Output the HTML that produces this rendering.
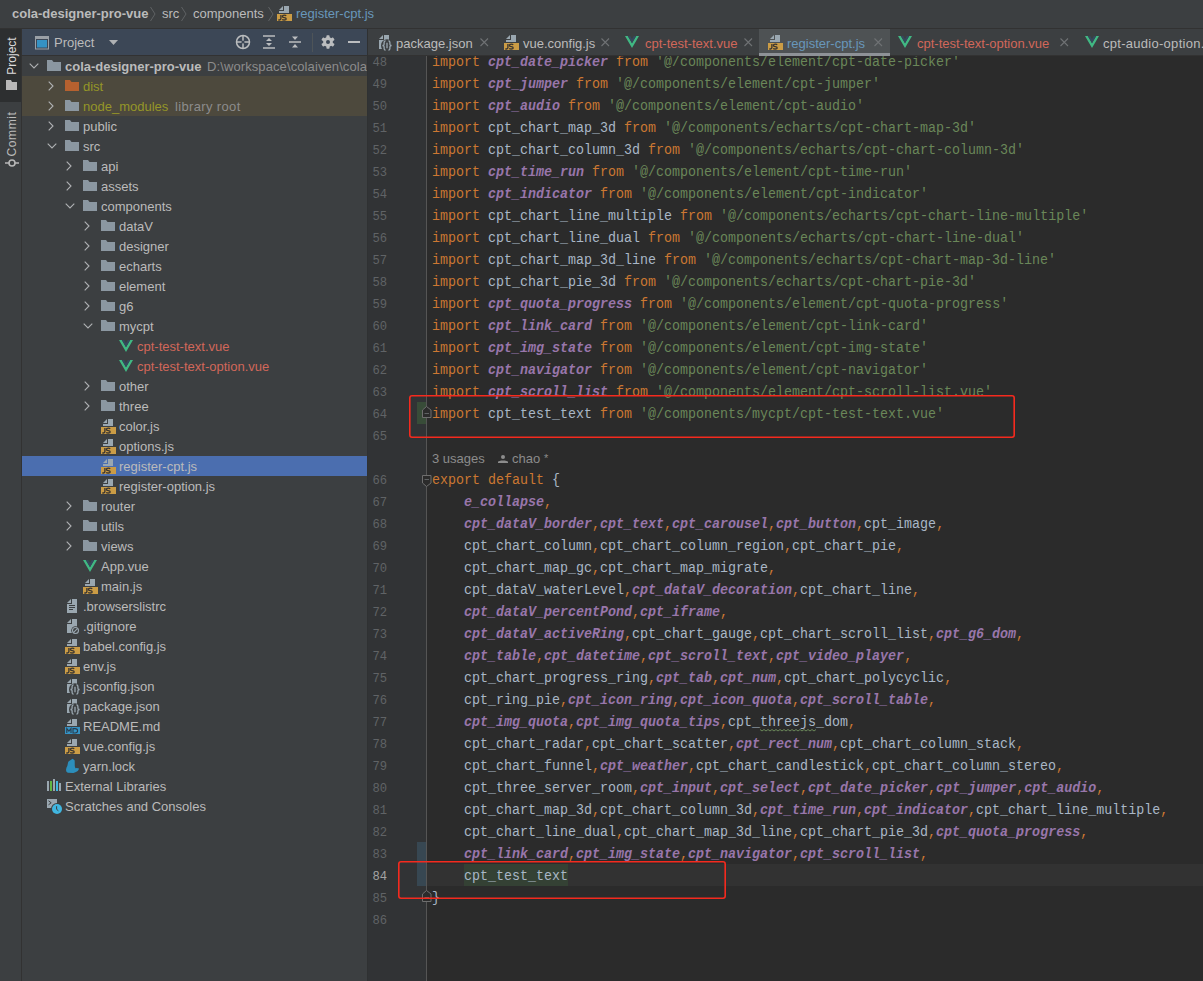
<!DOCTYPE html><html><head><meta charset="utf-8"><style>
*{margin:0;padding:0;box-sizing:border-box}
html,body{width:1203px;height:981px;overflow:hidden;background:#3C3F41}
body{position:relative;font-family:"Liberation Sans",sans-serif;font-size:13px;color:#BBBBBB}
.a{position:absolute}
.t{position:absolute;white-space:pre;line-height:16px}
.code{position:absolute;white-space:pre;font-family:"Liberation Mono",monospace;font-size:14.5px;line-height:22px;color:#A9B7C6;transform:scaleX(0.91954);transform-origin:0 0}
.k{color:#CC7832}
.s{color:#6A8759}
.i{color:#9876AA;font-style:italic;font-weight:bold}
.ln{position:absolute;font-family:"Liberation Mono",monospace;font-size:13.5px;color:#606366;text-align:right;width:30px;line-height:22px;transform:scaleX(0.9);transform-origin:100% 50%}
svg{position:absolute;overflow:visible}
</style></head><body><div class="a" style="left:0;top:0;width:1203px;height:28px;background:#3C3F41"></div><div class="a" style="left:0;top:28px;width:1203px;height:1px;background:#323232"></div><div class="t" style="left:12px;top:6px;font-weight:bold;color:#BBBBBB">cola-designer-pro-vue</div><svg style="left:150px;top:6px" width="6" height="16"><path d="M0.5 1 L5 8 L0.5 15" fill="none" stroke="#5F6264" stroke-width="1"/></svg><div class="t" style="left:162px;top:6px">src</div><svg style="left:181px;top:6px" width="6" height="16"><path d="M0.5 1 L5 8 L0.5 15" fill="none" stroke="#5F6264" stroke-width="1"/></svg><div class="t" style="left:193px;top:6px">components</div><svg style="left:268px;top:6px" width="6" height="16"><path d="M0.5 1 L5 8 L0.5 15" fill="none" stroke="#5F6264" stroke-width="1"/></svg><svg style="left:277px;top:6px" width="16" height="16" viewBox="0 0 16 16"><path d="M2 4 L6 0 V4 Z" fill="#9AA7B0"/><path d="M7 0 H12 V7 H2 V5 H7 Z" fill="#9AA7B0"/><rect x="0" y="8" width="15" height="7" fill="#CB9C45"/><path d="M3.9 9 V12.6 Q3.9 14 2.5 14 H1.3" fill="none" stroke="#3A3530" stroke-width="1.35"/><path d="M9.2 9.7 Q8.7 9.1 7.3 9.1 Q5.4 9.1 5.4 10.4 Q5.4 11.4 7.2 11.6 Q9.2 11.8 9.2 12.9 Q9.2 14 7.2 14 Q5.8 14 5.1 13.4" fill="none" stroke="#3A3530" stroke-width="1.35"/></svg><div class="t" style="left:296px;top:6px;color:#6897BB">register-cpt.js</div><div class="a" style="left:0;top:29px;width:21px;height:952px;background:#3C3F41"></div><div class="a" style="left:21px;top:29px;width:1px;height:952px;background:#323232"></div><div class="a" style="left:0;top:29px;width:21px;height:73px;background:#2D2F30"></div><div class="t" style="left:-9px;top:48px;width:42px;transform:rotate(-90deg);text-align:center;font-size:12px;color:#DDDDDD">Project</div><svg style="left:6px;top:80px" width="12" height="10"><path d="M0 0 H5 L6 2 H11 V10 H0 Z" fill="#B8B8B8"/></svg><div class="t" style="left:-14px;top:126px;width:52px;transform:rotate(-90deg);text-align:center;font-size:12px;letter-spacing:0.6px;color:#BBBBBB">Commit</div><svg style="left:5px;top:157px" width="14" height="12"><circle cx="7" cy="6" r="3" fill="none" stroke="#B8B8B8" stroke-width="1.6"/><path d="M0 6 H4 M10 6 H14" stroke="#B8B8B8" stroke-width="1.6"/></svg><div class="a" style="left:22px;top:29px;width:345px;height:26px;background:#3C4756"></div><div class="a" style="left:22px;top:55px;width:345px;height:1px;background:#323232"></div><div class="a" style="left:367px;top:29px;width:1px;height:952px;background:#2F3132"></div><svg style="left:35px;top:36px" width="14" height="14"><rect x="0.5" y="0.5" width="13" height="12.5" fill="none" stroke="#9AA0A6"/><rect x="1" y="1" width="12" height="2" fill="#9AA0A6"/><rect x="2" y="4" width="10" height="7.5" fill="#3592C4"/></svg><div class="t" style="left:54px;top:35px;color:#BBBBBB">Project</div><svg style="left:109px;top:40px" width="9" height="6"><path d="M0 0 H9 L4.5 5 Z" fill="#AFB1B3"/></svg><svg style="left:235px;top:34px" width="16" height="16"><circle cx="8" cy="8" r="6.5" fill="none" stroke="#BBBDBF" stroke-width="1.5"/><path d="M8 1 V15 M1 8 H15" stroke="#BBBDBF" stroke-width="1.5"/><circle cx="8" cy="8" r="1.6" fill="#3C4756"/></svg><svg style="left:262px;top:35px" width="14" height="14"><path d="M1 1 H13 M1 13 H13" stroke="#BBBDBF" stroke-width="1.5"/><path d="M7 3 L10 6 H4 Z M7 11 L10 8 H4 Z" fill="#BBBDBF"/></svg><svg style="left:288px;top:35px" width="14" height="14"><path d="M1 7 H13" stroke="#BBBDBF" stroke-width="1.5"/><path d="M4 1.5 H10 L7 5 Z M4 12.5 H10 L7 9 Z" fill="#BBBDBF"/></svg><div class="a" style="left:312px;top:33px;width:1px;height:19px;background:#4E5458"></div><svg style="left:321px;top:35px" width="14" height="14" viewBox="0 0 14 14"><g fill="#BBBDBF"><circle cx="7" cy="7" r="4.9"/><rect x="5.4" y="0.2" width="3.2" height="3" rx="0.8" transform="rotate(0 7 7)"/><rect x="5.4" y="0.2" width="3.2" height="3" rx="0.8" transform="rotate(60 7 7)"/><rect x="5.4" y="0.2" width="3.2" height="3" rx="0.8" transform="rotate(120 7 7)"/><rect x="5.4" y="0.2" width="3.2" height="3" rx="0.8" transform="rotate(180 7 7)"/><rect x="5.4" y="0.2" width="3.2" height="3" rx="0.8" transform="rotate(240 7 7)"/><rect x="5.4" y="0.2" width="3.2" height="3" rx="0.8" transform="rotate(300 7 7)"/></g><circle cx="7" cy="7" r="2" fill="#3C4756"/></svg><div class="a" style="left:348px;top:41px;width:12px;height:2px;background:#BBBDBF"></div><div class="a" style="left:22px;top:76px;width:345px;height:40px;background:#4D493D"></div><div class="a" style="left:22px;top:456px;width:345px;height:20px;background:#4B6EAF"></div><svg style="left:29px;top:63px" width="10" height="6" viewBox="0 0 10 6"><path d="M0.7 0.7 L5 5 L9.3 0.7" fill="none" stroke="#AFB1B3" stroke-width="1.1"/></svg><svg style="left:47px;top:60px" width="14" height="11" viewBox="0 0 14 11"><path d="M0 0 H5 L6.5 2 H14 V11 H0 Z" fill="#8B97A1"/></svg><div class="t" style="left:65px;top:59px;color:#BBBBBB;font-weight:bold;">cola-designer-pro-vue</div><div class="t" style="left:207px;top:59px;color:#8C8C8C;width:160px;overflow:hidden;letter-spacing:0.1px">D:\workspace\colaiven\cola-designer-pro-vue</div><svg style="left:48px;top:81px" width="6" height="10" viewBox="0 0 6 10"><path d="M0.7 0.7 L5 5 L0.7 9.3" fill="none" stroke="#AFB1B3" stroke-width="1.1"/></svg><svg style="left:65px;top:80px" width="14" height="11" viewBox="0 0 14 11"><path d="M0 0 H5 L6.5 2 H14 V11 H0 Z" fill="#B6612F"/></svg><div class="t" style="left:83px;top:79px;color:#959628;">dist</div><svg style="left:48px;top:101px" width="6" height="10" viewBox="0 0 6 10"><path d="M0.7 0.7 L5 5 L0.7 9.3" fill="none" stroke="#AFB1B3" stroke-width="1.1"/></svg><svg style="left:65px;top:100px" width="14" height="11" viewBox="0 0 14 11"><path d="M0 0 H5 L6.5 2 H14 V11 H0 Z" fill="#8B97A1"/></svg><div class="t" style="left:83px;top:99px;color:#959628;">node_modules</div><div class="t" style="left:175px;top:99px;color:#8C8C8C;letter-spacing:0.35px">library root</div><svg style="left:48px;top:121px" width="6" height="10" viewBox="0 0 6 10"><path d="M0.7 0.7 L5 5 L0.7 9.3" fill="none" stroke="#AFB1B3" stroke-width="1.1"/></svg><svg style="left:65px;top:120px" width="14" height="11" viewBox="0 0 14 11"><path d="M0 0 H5 L6.5 2 H14 V11 H0 Z" fill="#8B97A1"/></svg><div class="t" style="left:83px;top:119px;color:#BBBBBB;">public</div><svg style="left:47px;top:143px" width="10" height="6" viewBox="0 0 10 6"><path d="M0.7 0.7 L5 5 L9.3 0.7" fill="none" stroke="#AFB1B3" stroke-width="1.1"/></svg><svg style="left:65px;top:140px" width="14" height="11" viewBox="0 0 14 11"><path d="M0 0 H5 L6.5 2 H14 V11 H0 Z" fill="#8B97A1"/></svg><div class="t" style="left:83px;top:139px;color:#BBBBBB;">src</div><svg style="left:66px;top:161px" width="6" height="10" viewBox="0 0 6 10"><path d="M0.7 0.7 L5 5 L0.7 9.3" fill="none" stroke="#AFB1B3" stroke-width="1.1"/></svg><svg style="left:83px;top:160px" width="14" height="11" viewBox="0 0 14 11"><path d="M0 0 H5 L6.5 2 H14 V11 H0 Z" fill="#8B97A1"/></svg><div class="t" style="left:101px;top:159px;color:#BBBBBB;">api</div><svg style="left:66px;top:181px" width="6" height="10" viewBox="0 0 6 10"><path d="M0.7 0.7 L5 5 L0.7 9.3" fill="none" stroke="#AFB1B3" stroke-width="1.1"/></svg><svg style="left:83px;top:180px" width="14" height="11" viewBox="0 0 14 11"><path d="M0 0 H5 L6.5 2 H14 V11 H0 Z" fill="#8B97A1"/></svg><div class="t" style="left:101px;top:179px;color:#BBBBBB;">assets</div><svg style="left:65px;top:203px" width="10" height="6" viewBox="0 0 10 6"><path d="M0.7 0.7 L5 5 L9.3 0.7" fill="none" stroke="#AFB1B3" stroke-width="1.1"/></svg><svg style="left:83px;top:200px" width="14" height="11" viewBox="0 0 14 11"><path d="M0 0 H5 L6.5 2 H14 V11 H0 Z" fill="#8B97A1"/></svg><div class="t" style="left:101px;top:199px;color:#BBBBBB;">components</div><svg style="left:84px;top:221px" width="6" height="10" viewBox="0 0 6 10"><path d="M0.7 0.7 L5 5 L0.7 9.3" fill="none" stroke="#AFB1B3" stroke-width="1.1"/></svg><svg style="left:101px;top:220px" width="14" height="11" viewBox="0 0 14 11"><path d="M0 0 H5 L6.5 2 H14 V11 H0 Z" fill="#8B97A1"/></svg><div class="t" style="left:119px;top:219px;color:#BBBBBB;">dataV</div><svg style="left:84px;top:241px" width="6" height="10" viewBox="0 0 6 10"><path d="M0.7 0.7 L5 5 L0.7 9.3" fill="none" stroke="#AFB1B3" stroke-width="1.1"/></svg><svg style="left:101px;top:240px" width="14" height="11" viewBox="0 0 14 11"><path d="M0 0 H5 L6.5 2 H14 V11 H0 Z" fill="#8B97A1"/></svg><div class="t" style="left:119px;top:239px;color:#BBBBBB;">designer</div><svg style="left:84px;top:261px" width="6" height="10" viewBox="0 0 6 10"><path d="M0.7 0.7 L5 5 L0.7 9.3" fill="none" stroke="#AFB1B3" stroke-width="1.1"/></svg><svg style="left:101px;top:260px" width="14" height="11" viewBox="0 0 14 11"><path d="M0 0 H5 L6.5 2 H14 V11 H0 Z" fill="#8B97A1"/></svg><div class="t" style="left:119px;top:259px;color:#BBBBBB;">echarts</div><svg style="left:84px;top:281px" width="6" height="10" viewBox="0 0 6 10"><path d="M0.7 0.7 L5 5 L0.7 9.3" fill="none" stroke="#AFB1B3" stroke-width="1.1"/></svg><svg style="left:101px;top:280px" width="14" height="11" viewBox="0 0 14 11"><path d="M0 0 H5 L6.5 2 H14 V11 H0 Z" fill="#8B97A1"/></svg><div class="t" style="left:119px;top:279px;color:#BBBBBB;">element</div><svg style="left:84px;top:301px" width="6" height="10" viewBox="0 0 6 10"><path d="M0.7 0.7 L5 5 L0.7 9.3" fill="none" stroke="#AFB1B3" stroke-width="1.1"/></svg><svg style="left:101px;top:300px" width="14" height="11" viewBox="0 0 14 11"><path d="M0 0 H5 L6.5 2 H14 V11 H0 Z" fill="#8B97A1"/></svg><div class="t" style="left:119px;top:299px;color:#BBBBBB;">g6</div><svg style="left:83px;top:323px" width="10" height="6" viewBox="0 0 10 6"><path d="M0.7 0.7 L5 5 L9.3 0.7" fill="none" stroke="#AFB1B3" stroke-width="1.1"/></svg><svg style="left:101px;top:320px" width="14" height="11" viewBox="0 0 14 11"><path d="M0 0 H5 L6.5 2 H14 V11 H0 Z" fill="#8B97A1"/></svg><div class="t" style="left:119px;top:319px;color:#BBBBBB;">mycpt</div><svg style="left:119px;top:340px" width="14" height="12" viewBox="0 0 14 12"><path d="M0 0 H2.8 L7 7.2 L11.2 0 H14 L7 12 Z" fill="#41B883"/><path d="M2.8 0 H5.2 L7 3.2 L8.8 0 H11.2 L7 7.2 Z" fill="#35495E"/></svg><div class="t" style="left:137px;top:339px;color:#D1675A;">cpt-test-text.vue</div><svg style="left:119px;top:360px" width="14" height="12" viewBox="0 0 14 12"><path d="M0 0 H2.8 L7 7.2 L11.2 0 H14 L7 12 Z" fill="#41B883"/><path d="M2.8 0 H5.2 L7 3.2 L8.8 0 H11.2 L7 7.2 Z" fill="#35495E"/></svg><div class="t" style="left:137px;top:359px;color:#D1675A;">cpt-test-text-option.vue</div><svg style="left:84px;top:381px" width="6" height="10" viewBox="0 0 6 10"><path d="M0.7 0.7 L5 5 L0.7 9.3" fill="none" stroke="#AFB1B3" stroke-width="1.1"/></svg><svg style="left:101px;top:380px" width="14" height="11" viewBox="0 0 14 11"><path d="M0 0 H5 L6.5 2 H14 V11 H0 Z" fill="#8B97A1"/></svg><div class="t" style="left:119px;top:379px;color:#BBBBBB;">other</div><svg style="left:84px;top:401px" width="6" height="10" viewBox="0 0 6 10"><path d="M0.7 0.7 L5 5 L0.7 9.3" fill="none" stroke="#AFB1B3" stroke-width="1.1"/></svg><svg style="left:101px;top:400px" width="14" height="11" viewBox="0 0 14 11"><path d="M0 0 H5 L6.5 2 H14 V11 H0 Z" fill="#8B97A1"/></svg><div class="t" style="left:119px;top:399px;color:#BBBBBB;">three</div><svg style="left:101px;top:419px" width="16" height="16" viewBox="0 0 16 16"><path d="M2 4 L6 0 V4 Z" fill="#9AA7B0"/><path d="M7 0 H12 V7 H2 V5 H7 Z" fill="#9AA7B0"/><rect x="0" y="8" width="15" height="7" fill="#CB9C45"/><path d="M3.9 9 V12.6 Q3.9 14 2.5 14 H1.3" fill="none" stroke="#3A3530" stroke-width="1.35"/><path d="M9.2 9.7 Q8.7 9.1 7.3 9.1 Q5.4 9.1 5.4 10.4 Q5.4 11.4 7.2 11.6 Q9.2 11.8 9.2 12.9 Q9.2 14 7.2 14 Q5.8 14 5.1 13.4" fill="none" stroke="#3A3530" stroke-width="1.35"/></svg><div class="t" style="left:119px;top:419px;color:#BBBBBB;">color.js</div><svg style="left:101px;top:439px" width="16" height="16" viewBox="0 0 16 16"><path d="M2 4 L6 0 V4 Z" fill="#9AA7B0"/><path d="M7 0 H12 V7 H2 V5 H7 Z" fill="#9AA7B0"/><rect x="0" y="8" width="15" height="7" fill="#CB9C45"/><path d="M3.9 9 V12.6 Q3.9 14 2.5 14 H1.3" fill="none" stroke="#3A3530" stroke-width="1.35"/><path d="M9.2 9.7 Q8.7 9.1 7.3 9.1 Q5.4 9.1 5.4 10.4 Q5.4 11.4 7.2 11.6 Q9.2 11.8 9.2 12.9 Q9.2 14 7.2 14 Q5.8 14 5.1 13.4" fill="none" stroke="#3A3530" stroke-width="1.35"/></svg><div class="t" style="left:119px;top:439px;color:#BBBBBB;">options.js</div><svg style="left:101px;top:459px" width="16" height="16" viewBox="0 0 16 16"><path d="M2 4 L6 0 V4 Z" fill="#9AA7B0"/><path d="M7 0 H12 V7 H2 V5 H7 Z" fill="#9AA7B0"/><rect x="0" y="8" width="15" height="7" fill="#CB9C45"/><path d="M3.9 9 V12.6 Q3.9 14 2.5 14 H1.3" fill="none" stroke="#3A3530" stroke-width="1.35"/><path d="M9.2 9.7 Q8.7 9.1 7.3 9.1 Q5.4 9.1 5.4 10.4 Q5.4 11.4 7.2 11.6 Q9.2 11.8 9.2 12.9 Q9.2 14 7.2 14 Q5.8 14 5.1 13.4" fill="none" stroke="#3A3530" stroke-width="1.35"/></svg><div class="t" style="left:119px;top:459px;color:#BBBBBB;">register-cpt.js</div><svg style="left:101px;top:479px" width="16" height="16" viewBox="0 0 16 16"><path d="M2 4 L6 0 V4 Z" fill="#9AA7B0"/><path d="M7 0 H12 V7 H2 V5 H7 Z" fill="#9AA7B0"/><rect x="0" y="8" width="15" height="7" fill="#CB9C45"/><path d="M3.9 9 V12.6 Q3.9 14 2.5 14 H1.3" fill="none" stroke="#3A3530" stroke-width="1.35"/><path d="M9.2 9.7 Q8.7 9.1 7.3 9.1 Q5.4 9.1 5.4 10.4 Q5.4 11.4 7.2 11.6 Q9.2 11.8 9.2 12.9 Q9.2 14 7.2 14 Q5.8 14 5.1 13.4" fill="none" stroke="#3A3530" stroke-width="1.35"/></svg><div class="t" style="left:119px;top:479px;color:#BBBBBB;">register-option.js</div><svg style="left:66px;top:501px" width="6" height="10" viewBox="0 0 6 10"><path d="M0.7 0.7 L5 5 L0.7 9.3" fill="none" stroke="#AFB1B3" stroke-width="1.1"/></svg><svg style="left:83px;top:500px" width="14" height="11" viewBox="0 0 14 11"><path d="M0 0 H5 L6.5 2 H14 V11 H0 Z" fill="#8B97A1"/></svg><div class="t" style="left:101px;top:499px;color:#BBBBBB;">router</div><svg style="left:66px;top:521px" width="6" height="10" viewBox="0 0 6 10"><path d="M0.7 0.7 L5 5 L0.7 9.3" fill="none" stroke="#AFB1B3" stroke-width="1.1"/></svg><svg style="left:83px;top:520px" width="14" height="11" viewBox="0 0 14 11"><path d="M0 0 H5 L6.5 2 H14 V11 H0 Z" fill="#8B97A1"/></svg><div class="t" style="left:101px;top:519px;color:#BBBBBB;">utils</div><svg style="left:66px;top:541px" width="6" height="10" viewBox="0 0 6 10"><path d="M0.7 0.7 L5 5 L0.7 9.3" fill="none" stroke="#AFB1B3" stroke-width="1.1"/></svg><svg style="left:83px;top:540px" width="14" height="11" viewBox="0 0 14 11"><path d="M0 0 H5 L6.5 2 H14 V11 H0 Z" fill="#8B97A1"/></svg><div class="t" style="left:101px;top:539px;color:#BBBBBB;">views</div><svg style="left:83px;top:560px" width="14" height="12" viewBox="0 0 14 12"><path d="M0 0 H2.8 L7 7.2 L11.2 0 H14 L7 12 Z" fill="#41B883"/><path d="M2.8 0 H5.2 L7 3.2 L8.8 0 H11.2 L7 7.2 Z" fill="#35495E"/></svg><div class="t" style="left:101px;top:559px;color:#BBBBBB;">App.vue</div><svg style="left:83px;top:579px" width="16" height="16" viewBox="0 0 16 16"><path d="M2 4 L6 0 V4 Z" fill="#9AA7B0"/><path d="M7 0 H12 V7 H2 V5 H7 Z" fill="#9AA7B0"/><rect x="0" y="8" width="15" height="7" fill="#CB9C45"/><path d="M3.9 9 V12.6 Q3.9 14 2.5 14 H1.3" fill="none" stroke="#3A3530" stroke-width="1.35"/><path d="M9.2 9.7 Q8.7 9.1 7.3 9.1 Q5.4 9.1 5.4 10.4 Q5.4 11.4 7.2 11.6 Q9.2 11.8 9.2 12.9 Q9.2 14 7.2 14 Q5.8 14 5.1 13.4" fill="none" stroke="#3A3530" stroke-width="1.35"/></svg><div class="t" style="left:101px;top:579px;color:#BBBBBB;">main.js</div><svg style="left:65px;top:599px" width="14" height="15" viewBox="0 0 14 15"><path d="M2 4 L6 0 V4 Z" fill="#9AA7B0"/><path d="M7 0 H12 V14 H2 V5 H7 Z" fill="#9AA7B0"/><path d="M4 6.5 H10 M4 8.5 H10 M4 10.5 H8" stroke="#3C3F41" stroke-width="1"/></svg><div class="t" style="left:83px;top:599px;color:#BBBBBB;">.browserslistrc</div><svg style="left:65px;top:619px" width="16" height="16" viewBox="0 0 16 16"><path d="M2 4 L6 0 V4 Z" fill="#9AA7B0"/><path d="M7 0 H12 V14 H2 V5 H7 Z" fill="#9AA7B0"/><circle cx="10.5" cy="11.5" r="4.3" fill="#3C3F41"/><circle cx="10.5" cy="11.5" r="3" fill="none" stroke="#9AA7B0" stroke-width="1.1"/><path d="M8.4 13.6 L12.6 9.4" stroke="#9AA7B0" stroke-width="1.1"/></svg><div class="t" style="left:83px;top:619px;color:#BBBBBB;">.gitignore</div><svg style="left:65px;top:639px" width="16" height="16" viewBox="0 0 16 16"><path d="M2 4 L6 0 V4 Z" fill="#9AA7B0"/><path d="M7 0 H12 V7 H2 V5 H7 Z" fill="#9AA7B0"/><rect x="0" y="8" width="15" height="7" fill="#CB9C45"/><path d="M3.9 9 V12.6 Q3.9 14 2.5 14 H1.3" fill="none" stroke="#3A3530" stroke-width="1.35"/><path d="M9.2 9.7 Q8.7 9.1 7.3 9.1 Q5.4 9.1 5.4 10.4 Q5.4 11.4 7.2 11.6 Q9.2 11.8 9.2 12.9 Q9.2 14 7.2 14 Q5.8 14 5.1 13.4" fill="none" stroke="#3A3530" stroke-width="1.35"/></svg><div class="t" style="left:83px;top:639px;color:#BBBBBB;">babel.config.js</div><svg style="left:65px;top:659px" width="16" height="16" viewBox="0 0 16 16"><path d="M2 4 L6 0 V4 Z" fill="#9AA7B0"/><path d="M7 0 H12 V7 H2 V5 H7 Z" fill="#9AA7B0"/><rect x="0" y="8" width="15" height="7" fill="#CB9C45"/><path d="M3.9 9 V12.6 Q3.9 14 2.5 14 H1.3" fill="none" stroke="#3A3530" stroke-width="1.35"/><path d="M9.2 9.7 Q8.7 9.1 7.3 9.1 Q5.4 9.1 5.4 10.4 Q5.4 11.4 7.2 11.6 Q9.2 11.8 9.2 12.9 Q9.2 14 7.2 14 Q5.8 14 5.1 13.4" fill="none" stroke="#3A3530" stroke-width="1.35"/></svg><div class="t" style="left:83px;top:659px;color:#BBBBBB;">env.js</div><svg style="left:65px;top:679px" width="17" height="17" viewBox="0 0 17 17"><path d="M2 4 L6 0 V4 Z" fill="#9AA7B0"/><path d="M7 0 H12 V14 H2 V5 H7 Z" fill="#9AA7B0"/><ellipse cx="10" cy="10.5" rx="6" ry="6.2" fill="#3C3F41"/><path d="M8.6 5.8 Q7.1 5.8 7.1 7.4 V9.2 Q7.1 10.5 5.4 10.5 Q7.1 10.5 7.1 11.8 V13.6 Q7.1 15.2 8.6 15.2 M11.4 5.8 Q12.9 5.8 12.9 7.4 V9.2 Q12.9 10.5 14.6 10.5 Q12.9 10.5 12.9 11.8 V13.6 Q12.9 15.2 11.4 15.2 M10 7.8 V13.2" fill="none" stroke="#9AA7B0" stroke-width="1.3"/></svg><div class="t" style="left:83px;top:679px;color:#BBBBBB;">jsconfig.json</div><svg style="left:65px;top:699px" width="17" height="17" viewBox="0 0 17 17"><path d="M2 4 L6 0 V4 Z" fill="#9AA7B0"/><path d="M7 0 H12 V14 H2 V5 H7 Z" fill="#9AA7B0"/><ellipse cx="10" cy="10.5" rx="6" ry="6.2" fill="#3C3F41"/><path d="M8.6 5.8 Q7.1 5.8 7.1 7.4 V9.2 Q7.1 10.5 5.4 10.5 Q7.1 10.5 7.1 11.8 V13.6 Q7.1 15.2 8.6 15.2 M11.4 5.8 Q12.9 5.8 12.9 7.4 V9.2 Q12.9 10.5 14.6 10.5 Q12.9 10.5 12.9 11.8 V13.6 Q12.9 15.2 11.4 15.2 M10 7.8 V13.2" fill="none" stroke="#9AA7B0" stroke-width="1.3"/></svg><div class="t" style="left:83px;top:699px;color:#BBBBBB;">package.json</div><svg style="left:65px;top:719px" width="16" height="16" viewBox="0 0 16 16"><path d="M2 4 L6 0 V4 Z" fill="#9AA7B0"/><path d="M7 0 H12 V7 H2 V5 H7 Z" fill="#9AA7B0"/><rect x="0" y="8" width="15" height="7" fill="#3592C4"/><path d="M1.8 14 V9.6 L3.9 12.2 L6 9.6 V14" fill="none" stroke="#2A3C4C" stroke-width="1.1"/><path d="M8 9.6 H10 Q12.6 9.6 12.6 11.8 Q12.6 14 10 14 H8 Z" fill="none" stroke="#2A3C4C" stroke-width="1.1"/></svg><div class="t" style="left:83px;top:719px;color:#BBBBBB;">README.md</div><svg style="left:65px;top:739px" width="16" height="16" viewBox="0 0 16 16"><path d="M2 4 L6 0 V4 Z" fill="#9AA7B0"/><path d="M7 0 H12 V7 H2 V5 H7 Z" fill="#9AA7B0"/><rect x="0" y="8" width="15" height="7" fill="#CB9C45"/><path d="M3.9 9 V12.6 Q3.9 14 2.5 14 H1.3" fill="none" stroke="#3A3530" stroke-width="1.35"/><path d="M9.2 9.7 Q8.7 9.1 7.3 9.1 Q5.4 9.1 5.4 10.4 Q5.4 11.4 7.2 11.6 Q9.2 11.8 9.2 12.9 Q9.2 14 7.2 14 Q5.8 14 5.1 13.4" fill="none" stroke="#3A3530" stroke-width="1.35"/></svg><div class="t" style="left:83px;top:739px;color:#BBBBBB;">vue.config.js</div><svg style="left:65px;top:756px" width="16" height="18" viewBox="0 0 16 18"><path d="M7.5 2.8 Q8.8 3.2 9.7 4.6 L9.8 10.3 L10.4 12.2 Q12.5 11.6 14 12.6 Q13.6 14.2 12.7 14.9 Q10.5 16.6 8.3 16.9 L2.8 16.8 Q1 16 1 14 Q1.2 11.5 2.3 10 L3.2 6 Q4 4.8 5 4.6 Z" fill="#2C8EBB"/></svg><div class="t" style="left:83px;top:759px;color:#BBBBBB;">yarn.lock</div><svg style="left:47px;top:779px" width="15" height="13" viewBox="0 0 15 13"><rect x="0" y="2" width="2" height="10" fill="#9AA7B0"/><rect x="3" y="2" width="2" height="10" fill="#62B543"/><rect x="6" y="0" width="2" height="12" fill="#9AA7B0"/><rect x="9" y="2" width="2" height="10" fill="#40B6E0"/><rect x="12" y="4" width="2" height="8" fill="#9AA7B0"/></svg><div class="t" style="left:65px;top:779px;color:#BBBBBB;">External Libraries</div><svg style="left:47px;top:799px" width="17" height="17" viewBox="0 0 17 17"><rect x="0" y="0" width="10" height="9" fill="#9AA7B0"/><path d="M1.5 1.8 L4.2 3.8 L1.5 5.8" fill="none" stroke="#3C3F41" stroke-width="1"/><circle cx="10" cy="10" r="6" fill="#3C3F41"/><circle cx="10" cy="10" r="5" fill="#40B6E0"/><path d="M9.6 7.2 V10.3 L11.4 11.8" fill="none" stroke="#3C3F41" stroke-width="1"/></svg><div class="t" style="left:65px;top:799px;color:#BBBBBB;">Scratches and Consoles</div><div class="a" style="left:368px;top:29px;width:835px;height:26px;background:#3C3F41"></div><div class="a" style="left:368px;top:55px;width:835px;height:1px;background:#323232"></div><div class="a" style="left:759px;top:29px;width:131px;height:27px;background:#4E5254"></div><div class="a" style="left:759px;top:53px;width:131px;height:3px;background:#8E9297"></div><svg style="left:377px;top:35px" width="17" height="17" viewBox="0 0 17 17"><path d="M2 4 L6 0 V4 Z" fill="#9AA7B0"/><path d="M7 0 H12 V14 H2 V5 H7 Z" fill="#9AA7B0"/><ellipse cx="10" cy="10.5" rx="6" ry="6.2" fill="#3C3F41"/><path d="M8.6 5.8 Q7.1 5.8 7.1 7.4 V9.2 Q7.1 10.5 5.4 10.5 Q7.1 10.5 7.1 11.8 V13.6 Q7.1 15.2 8.6 15.2 M11.4 5.8 Q12.9 5.8 12.9 7.4 V9.2 Q12.9 10.5 14.6 10.5 Q12.9 10.5 12.9 11.8 V13.6 Q12.9 15.2 11.4 15.2 M10 7.8 V13.2" fill="none" stroke="#9AA7B0" stroke-width="1.3"/></svg><div class="t" style="left:396px;top:36px;color:#BBBBBB">package.json</div><svg style="left:480px;top:38px" width="9" height="9"><path d="M0.5 0.5 L8 8 M8 0.5 L0.5 8" stroke="#6F7274" stroke-width="1.1"/></svg><svg style="left:504px;top:35px" width="16" height="16" viewBox="0 0 16 16"><path d="M2 4 L6 0 V4 Z" fill="#9AA7B0"/><path d="M7 0 H12 V7 H2 V5 H7 Z" fill="#9AA7B0"/><rect x="0" y="8" width="15" height="7" fill="#CB9C45"/><path d="M3.9 9 V12.6 Q3.9 14 2.5 14 H1.3" fill="none" stroke="#3A3530" stroke-width="1.35"/><path d="M9.2 9.7 Q8.7 9.1 7.3 9.1 Q5.4 9.1 5.4 10.4 Q5.4 11.4 7.2 11.6 Q9.2 11.8 9.2 12.9 Q9.2 14 7.2 14 Q5.8 14 5.1 13.4" fill="none" stroke="#3A3530" stroke-width="1.35"/></svg><div class="t" style="left:523px;top:36px;color:#BBBBBB">vue.config.js</div><svg style="left:601px;top:38px" width="9" height="9"><path d="M0.5 0.5 L8 8 M8 0.5 L0.5 8" stroke="#6F7274" stroke-width="1.1"/></svg><svg style="left:625px;top:36px" width="14" height="12" viewBox="0 0 14 12"><path d="M0 0 H2.8 L7 7.2 L11.2 0 H14 L7 12 Z" fill="#41B883"/><path d="M2.8 0 H5.2 L7 3.2 L8.8 0 H11.2 L7 7.2 Z" fill="#35495E"/></svg><div class="t" style="left:645px;top:36px;color:#D1675A">cpt-test-text.vue</div><svg style="left:744px;top:38px" width="9" height="9"><path d="M0.5 0.5 L8 8 M8 0.5 L0.5 8" stroke="#6F7274" stroke-width="1.1"/></svg><svg style="left:768px;top:35px" width="16" height="16" viewBox="0 0 16 16"><path d="M2 4 L6 0 V4 Z" fill="#9AA7B0"/><path d="M7 0 H12 V7 H2 V5 H7 Z" fill="#9AA7B0"/><rect x="0" y="8" width="15" height="7" fill="#CB9C45"/><path d="M3.9 9 V12.6 Q3.9 14 2.5 14 H1.3" fill="none" stroke="#3A3530" stroke-width="1.35"/><path d="M9.2 9.7 Q8.7 9.1 7.3 9.1 Q5.4 9.1 5.4 10.4 Q5.4 11.4 7.2 11.6 Q9.2 11.8 9.2 12.9 Q9.2 14 7.2 14 Q5.8 14 5.1 13.4" fill="none" stroke="#3A3530" stroke-width="1.35"/></svg><div class="t" style="left:787px;top:36px;color:#6897BB">register-cpt.js</div><svg style="left:874px;top:38px" width="9" height="9"><path d="M0.5 0.5 L8 8 M8 0.5 L0.5 8" stroke="#6F7274" stroke-width="1.1"/></svg><svg style="left:898px;top:36px" width="14" height="12" viewBox="0 0 14 12"><path d="M0 0 H2.8 L7 7.2 L11.2 0 H14 L7 12 Z" fill="#41B883"/><path d="M2.8 0 H5.2 L7 3.2 L8.8 0 H11.2 L7 7.2 Z" fill="#35495E"/></svg><div class="t" style="left:917px;top:36px;color:#D1675A">cpt-test-text-option.vue</div><svg style="left:1060px;top:38px" width="9" height="9"><path d="M0.5 0.5 L8 8 M8 0.5 L0.5 8" stroke="#6F7274" stroke-width="1.1"/></svg><svg style="left:1085px;top:36px" width="14" height="12" viewBox="0 0 14 12"><path d="M0 0 H2.8 L7 7.2 L11.2 0 H14 L7 12 Z" fill="#41B883"/><path d="M2.8 0 H5.2 L7 3.2 L8.8 0 H11.2 L7 7.2 Z" fill="#35495E"/></svg><div class="t" style="left:1103px;top:36px;color:#BBBBBB;letter-spacing:0.28px">cpt-audio-option.vue</div><div class="a" style="left:368px;top:56px;width:835px;height:925px;background:#2B2B2B;overflow:hidden" id="ed"><div class="a" style="left:0;top:0;width:58px;height:925px;background:#313335"></div><div class="a" style="left:58px;top:0;width:1px;height:925px;background:#555555"></div><div class="a" style="left:59px;top:808px;width:776px;height:22px;background:#323232"></div><div class="a" style="left:49px;top:346px;width:9px;height:22px;background:#384C38"></div><div class="a" style="left:49px;top:786px;width:9px;height:44px;background:#374752"></div><div class="a" style="left:96px;top:808px;width:104px;height:22px;background:#344134"></div><div class="ln" style="left:-11px;top:-4px;">48</div><div class="code" style="left:64px;top:-5.5px"><span class="k">import</span> <span class="i">cpt_date_picker</span> <span class="k">from</span> <span class="s">&#x27;@/components/element/cpt-date-picker&#x27;</span></div><div class="ln" style="left:-11px;top:18px;">49</div><div class="code" style="left:64px;top:16.5px"><span class="k">import</span> <span class="i">cpt_jumper</span> <span class="k">from</span> <span class="s">&#x27;@/components/element/cpt-jumper&#x27;</span></div><div class="ln" style="left:-11px;top:40px;">50</div><div class="code" style="left:64px;top:38.5px"><span class="k">import</span> <span class="i">cpt_audio</span> <span class="k">from</span> <span class="s">&#x27;@/components/element/cpt-audio&#x27;</span></div><div class="ln" style="left:-11px;top:62px;">51</div><div class="code" style="left:64px;top:60.5px"><span class="k">import</span> cpt_chart_map_3d <span class="k">from</span> <span class="s">&#x27;@/components/echarts/cpt-chart-map-3d&#x27;</span></div><div class="ln" style="left:-11px;top:84px;">52</div><div class="code" style="left:64px;top:82.5px"><span class="k">import</span> cpt_chart_column_3d <span class="k">from</span> <span class="s">&#x27;@/components/echarts/cpt-chart-column-3d&#x27;</span></div><div class="ln" style="left:-11px;top:106px;">53</div><div class="code" style="left:64px;top:104.5px"><span class="k">import</span> <span class="i">cpt_time_run</span> <span class="k">from</span> <span class="s">&#x27;@/components/element/cpt-time-run&#x27;</span></div><div class="ln" style="left:-11px;top:128px;">54</div><div class="code" style="left:64px;top:126.5px"><span class="k">import</span> <span class="i">cpt_indicator</span> <span class="k">from</span> <span class="s">&#x27;@/components/element/cpt-indicator&#x27;</span></div><div class="ln" style="left:-11px;top:150px;">55</div><div class="code" style="left:64px;top:148.5px"><span class="k">import</span> cpt_chart_line_multiple <span class="k">from</span> <span class="s">&#x27;@/components/echarts/cpt-chart-line-multiple&#x27;</span></div><div class="ln" style="left:-11px;top:172px;">56</div><div class="code" style="left:64px;top:170.5px"><span class="k">import</span> cpt_chart_line_dual <span class="k">from</span> <span class="s">&#x27;@/components/echarts/cpt-chart-line-dual&#x27;</span></div><div class="ln" style="left:-11px;top:194px;">57</div><div class="code" style="left:64px;top:192.5px"><span class="k">import</span> cpt_chart_map_3d_line <span class="k">from</span> <span class="s">&#x27;@/components/echarts/cpt-chart-map-3d-line&#x27;</span></div><div class="ln" style="left:-11px;top:216px;">58</div><div class="code" style="left:64px;top:214.5px"><span class="k">import</span> cpt_chart_pie_3d <span class="k">from</span> <span class="s">&#x27;@/components/echarts/cpt-chart-pie-3d&#x27;</span></div><div class="ln" style="left:-11px;top:238px;">59</div><div class="code" style="left:64px;top:236.5px"><span class="k">import</span> <span class="i">cpt_quota_progress</span> <span class="k">from</span> <span class="s">&#x27;@/components/element/cpt-quota-progress&#x27;</span></div><div class="ln" style="left:-11px;top:260px;">60</div><div class="code" style="left:64px;top:258.5px"><span class="k">import</span> <span class="i">cpt_link_card</span> <span class="k">from</span> <span class="s">&#x27;@/components/element/cpt-link-card&#x27;</span></div><div class="ln" style="left:-11px;top:282px;">61</div><div class="code" style="left:64px;top:280.5px"><span class="k">import</span> <span class="i">cpt_img_state</span> <span class="k">from</span> <span class="s">&#x27;@/components/element/cpt-img-state&#x27;</span></div><div class="ln" style="left:-11px;top:304px;">62</div><div class="code" style="left:64px;top:302.5px"><span class="k">import</span> <span class="i">cpt_navigator</span> <span class="k">from</span> <span class="s">&#x27;@/components/element/cpt-navigator&#x27;</span></div><div class="ln" style="left:-11px;top:326px;">63</div><div class="code" style="left:64px;top:324.5px"><span class="k">import</span> <span class="i">cpt_scroll_list</span> <span class="k">from</span> <span class="s">&#x27;@/components/element/cpt-scroll-list.vue&#x27;</span></div><div class="ln" style="left:-11px;top:348px;">64</div><div class="code" style="left:64px;top:346.5px"><span class="k">import</span> cpt_test_text <span class="k">from</span> <span class="s">&#x27;@/components/mycpt/cpt-test-text.vue&#x27;</span></div><div class="ln" style="left:-11px;top:370px;">65</div><div class="ln" style="left:-11px;top:414px;">66</div><div class="code" style="left:64px;top:412.5px"><span class="k">export</span> <span class="k">default</span> {</div><div class="ln" style="left:-11px;top:436px;">67</div><div class="code" style="left:64px;top:434.5px">    <span class="i">e_collapse</span><span class="k">,</span></div><div class="ln" style="left:-11px;top:458px;">68</div><div class="code" style="left:64px;top:456.5px">    <span class="i">cpt_dataV_border</span><span class="k">,</span><span class="i">cpt_text</span><span class="k">,</span><span class="i">cpt_carousel</span><span class="k">,</span><span class="i">cpt_button</span><span class="k">,</span>cpt_image<span class="k">,</span></div><div class="ln" style="left:-11px;top:480px;">69</div><div class="code" style="left:64px;top:478.5px">    cpt_chart_column<span class="k">,</span>cpt_chart_column_region<span class="k">,</span>cpt_chart_pie<span class="k">,</span></div><div class="ln" style="left:-11px;top:502px;">70</div><div class="code" style="left:64px;top:500.5px">    cpt_chart_map_gc<span class="k">,</span>cpt_chart_map_migrate<span class="k">,</span></div><div class="ln" style="left:-11px;top:524px;">71</div><div class="code" style="left:64px;top:522.5px">    cpt_dataV_waterLevel<span class="k">,</span><span class="i">cpt_dataV_decoration</span><span class="k">,</span>cpt_chart_line<span class="k">,</span></div><div class="ln" style="left:-11px;top:546px;">72</div><div class="code" style="left:64px;top:544.5px">    <span class="i">cpt_dataV_percentPond</span><span class="k">,</span><span class="i">cpt_iframe</span><span class="k">,</span></div><div class="ln" style="left:-11px;top:568px;">73</div><div class="code" style="left:64px;top:566.5px">    <span class="i">cpt_dataV_activeRing</span><span class="k">,</span>cpt_chart_gauge<span class="k">,</span>cpt_chart_scroll_list<span class="k">,</span><span class="i">cpt_g6_dom</span><span class="k">,</span></div><div class="ln" style="left:-11px;top:590px;">74</div><div class="code" style="left:64px;top:588.5px">    <span class="i">cpt_table</span><span class="k">,</span><span class="i">cpt_datetime</span><span class="k">,</span><span class="i">cpt_scroll_text</span><span class="k">,</span><span class="i">cpt_video_player</span><span class="k">,</span></div><div class="ln" style="left:-11px;top:612px;">75</div><div class="code" style="left:64px;top:610.5px">    cpt_chart_progress_ring<span class="k">,</span><span class="i">cpt_tab</span><span class="k">,</span><span class="i">cpt_num</span><span class="k">,</span>cpt_chart_polycyclic<span class="k">,</span></div><div class="ln" style="left:-11px;top:634px;">76</div><div class="code" style="left:64px;top:632.5px">    cpt_ring_pie<span class="k">,</span><span class="i">cpt_icon_ring</span><span class="k">,</span><span class="i">cpt_icon_quota</span><span class="k">,</span><span class="i">cpt_scroll_table</span><span class="k">,</span></div><div class="ln" style="left:-11px;top:656px;">77</div><div class="code" style="left:64px;top:654.5px">    <span class="i">cpt_img_quota</span><span class="k">,</span><span class="i">cpt_img_quota_tips</span><span class="k">,</span>cpt_threejs_dom<span class="k">,</span></div><div class="ln" style="left:-11px;top:678px;">78</div><div class="code" style="left:64px;top:676.5px">    cpt_chart_radar<span class="k">,</span>cpt_chart_scatter<span class="k">,</span><span class="i">cpt_rect_num</span><span class="k">,</span>cpt_chart_column_stack<span class="k">,</span></div><div class="ln" style="left:-11px;top:700px;">79</div><div class="code" style="left:64px;top:698.5px">    cpt_chart_funnel<span class="k">,</span><span class="i">cpt_weather</span><span class="k">,</span>cpt_chart_candlestick<span class="k">,</span>cpt_chart_column_stereo<span class="k">,</span></div><div class="ln" style="left:-11px;top:722px;">80</div><div class="code" style="left:64px;top:720.5px">    cpt_three_server_room<span class="k">,</span><span class="i">cpt_input</span><span class="k">,</span><span class="i">cpt_select</span><span class="k">,</span><span class="i">cpt_date_picker</span><span class="k">,</span><span class="i">cpt_jumper</span><span class="k">,</span><span class="i">cpt_audio</span><span class="k">,</span></div><div class="ln" style="left:-11px;top:744px;">81</div><div class="code" style="left:64px;top:742.5px">    cpt_chart_map_3d<span class="k">,</span>cpt_chart_column_3d<span class="k">,</span><span class="i">cpt_time_run</span><span class="k">,</span><span class="i">cpt_indicator</span><span class="k">,</span>cpt_chart_line_multiple<span class="k">,</span></div><div class="ln" style="left:-11px;top:766px;">82</div><div class="code" style="left:64px;top:764.5px">    cpt_chart_line_dual<span class="k">,</span>cpt_chart_map_3d_line<span class="k">,</span>cpt_chart_pie_3d<span class="k">,</span><span class="i">cpt_quota_progress</span><span class="k">,</span></div><div class="ln" style="left:-11px;top:788px;">83</div><div class="code" style="left:64px;top:786.5px">    <span class="i">cpt_link_card</span><span class="k">,</span><span class="i">cpt_img_state</span><span class="k">,</span><span class="i">cpt_navigator</span><span class="k">,</span><span class="i">cpt_scroll_list</span><span class="k">,</span></div><div class="ln" style="left:-11px;top:810px;color:#A4A3A3">84</div><div class="code" style="left:64px;top:808.5px">    cpt_test_text</div><div class="ln" style="left:-11px;top:832px;">85</div><div class="code" style="left:64px;top:830.5px">}</div><div class="ln" style="left:-11px;top:854px;">86</div><svg style="left:54.0px;top:350px" width="10" height="12"><path d="M4.5 0.5 L9 4 V11.5 H0.5 V4 Z" fill="#2B2B2B" stroke="#6E6E6E" stroke-width="1"/><path d="M2.5 7.5 H7" stroke="#5F6264" stroke-width="1"/></svg><svg style="left:54.0px;top:419px" width="10" height="12"><path d="M0.5 0.5 H9 V8 L4.5 11.5 L0.5 8 Z" fill="#2B2B2B" stroke="#6E6E6E" stroke-width="1"/><path d="M2.5 4.5 H7" stroke="#5F6264" stroke-width="1"/></svg><svg style="left:54.0px;top:834px" width="10" height="12"><path d="M4.5 0.5 L9 4 V11.5 H0.5 V4 Z" fill="#2B2B2B" stroke="#6E6E6E" stroke-width="1"/><path d="M2.5 7.5 H7" stroke="#5F6264" stroke-width="1"/></svg><div class="t" style="left:64px;top:394.5px;color:#8C8C8C;font-size:13px">3 usages</div><svg style="left:130px;top:398.5px" width="10" height="8"><circle cx="5" cy="2" r="2" fill="#8C8C8C"/><path d="M0 8 V7 C0 5 10 5 10 7 V8 Z" fill="#8C8C8C"/></svg><div class="t" style="left:144px;top:394.5px;color:#8C8C8C;font-size:13px">chao</div><div class="t" style="left:176px;top:393.5px;color:#8C8C8C;font-size:11px">*</div><svg style="left:392px;top:673px" width="58" height="3"><polyline points="0,0.5 2,2 4,0.5 6,2 8,0.5 10,2 12,0.5 14,2 16,0.5 18,2 20,0.5 22,2 24,0.5 26,2 28,0.5 30,2 32,0.5 34,2 36,0.5 38,2 40,0.5 42,2 44,0.5 46,2 48,0.5 50,2 52,0.5 54,2 56,0.5" fill="none" stroke="#6A8759" stroke-width="1"/></svg></div><svg style="left:409px;top:395px" width="606" height="43"><rect x="0.8" y="0.8" width="604.4" height="41.4" rx="2.2" fill="none" stroke="#F52A1E" stroke-width="1.6"/></svg><svg style="left:398px;top:861px" width="328" height="38"><rect x="0.8" y="0.8" width="326.4" height="36.4" rx="2.2" fill="none" stroke="#F52A1E" stroke-width="1.6"/></svg></body></html>
